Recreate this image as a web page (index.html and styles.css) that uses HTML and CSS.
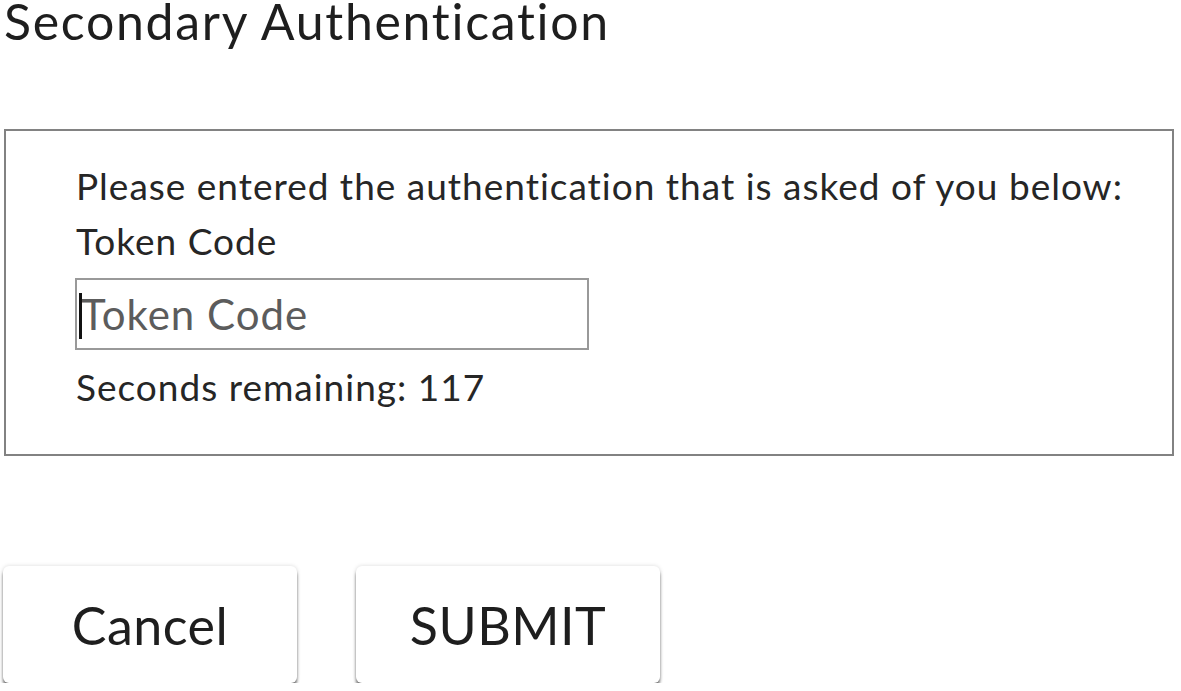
FILE: index.html
```html
<!DOCTYPE html>
<html lang="en">

<head>
    <meta charset="UTF-8">
    <meta name="viewport" content="width=device-width, initial-scale=1.0">
    <title>Secondary Authentication</title>
    <link rel="stylesheet" href="styles.css">
</head>

<body>
    <h1 class="titulo">Secondary Authentication</h1>
    <section class="caixa">
        <p class="linha">Please entered the authentication that is asked of you below:</p>
        <label class="linha" for="inToken">Token Code</label>
        <span class="campoWrap">
            <input type="text" id="inToken" class="campo" placeholder="Token Code" autofocus>
        </span>
        <p class="linha contador">Seconds remaining: <span id="outSegundos">117</span></p>
    </section>
    <div class="botoes">
        <button type="button" class="botao btCancelar">Cancel</button>
        <button type="button" class="botao btEnviar">SUBMIT</button>
    </div>
</body>

</html>
```

FILE: styles.css
```css
/* tela de autenticacao */
body {
    margin: 0;
    padding: 0 0 0 4px;
    font-family: Lato, "Open Sans", sans-serif;
    font-variant-ligatures: none;
    color: #222;
    background: #fff;
}

.titulo {
    margin: 2px 0 89px 0;
    font-size: 50px;
    font-weight: 400;
    line-height: 38px;
    letter-spacing: 1.7px;
    color: #1e1e1e;
}

.caixa {
    box-sizing: border-box;
    width: 1170px;
    border: 2px solid #828282;
    padding: 27px 0 40px 70px;
}

.linha {
    display: block;
    margin: 0;
    font-size: 37px;
    line-height: 55px;
    letter-spacing: 1px;
    color: #262626;
}

.campoWrap {
    position: relative;
    display: block;
    width: 514px;
    margin: 10px 0 0 -1px;
}

.campoWrap::before {
    content: "";
    position: absolute;
    left: 4px;
    top: 15px;
    width: 3px;
    height: 46px;
    background: #111;
}

.campo {
    display: block;
    box-sizing: border-box;
    width: 514px;
    height: 72px;
    padding: 0 4px;
    border: 2px solid #999;
    border-radius: 0;
    font-family: Lato, sans-serif;
    font-variant-ligatures: none;
    font-size: 42px;
    letter-spacing: 1px;
    color: #222;
    caret-color: transparent;
    outline: none;
}

.campo::placeholder {
    color: #5c5c5c;
}

.contador {
    margin-top: 9px;
}

.botoes {
    display: flex;
    gap: 59px;
    margin-top: 110px;
}

.botao {
    height: 117px;
    margin-left: -1px;
    border: none;
    border-radius: 6px;
    background: #fff;
    font-family: Lato, sans-serif;
    font-size: 52px;
    letter-spacing: 0.5px;
    color: #1e1e1e;
    box-shadow: 0 4px 3px rgba(0, 0, 0, 0.5), 0 0 4px rgba(0, 0, 0, 0.15);
}

.btCancelar {
    width: 294px;
}

.btEnviar {
    width: 304px;
    margin-left: 0;
}
```
